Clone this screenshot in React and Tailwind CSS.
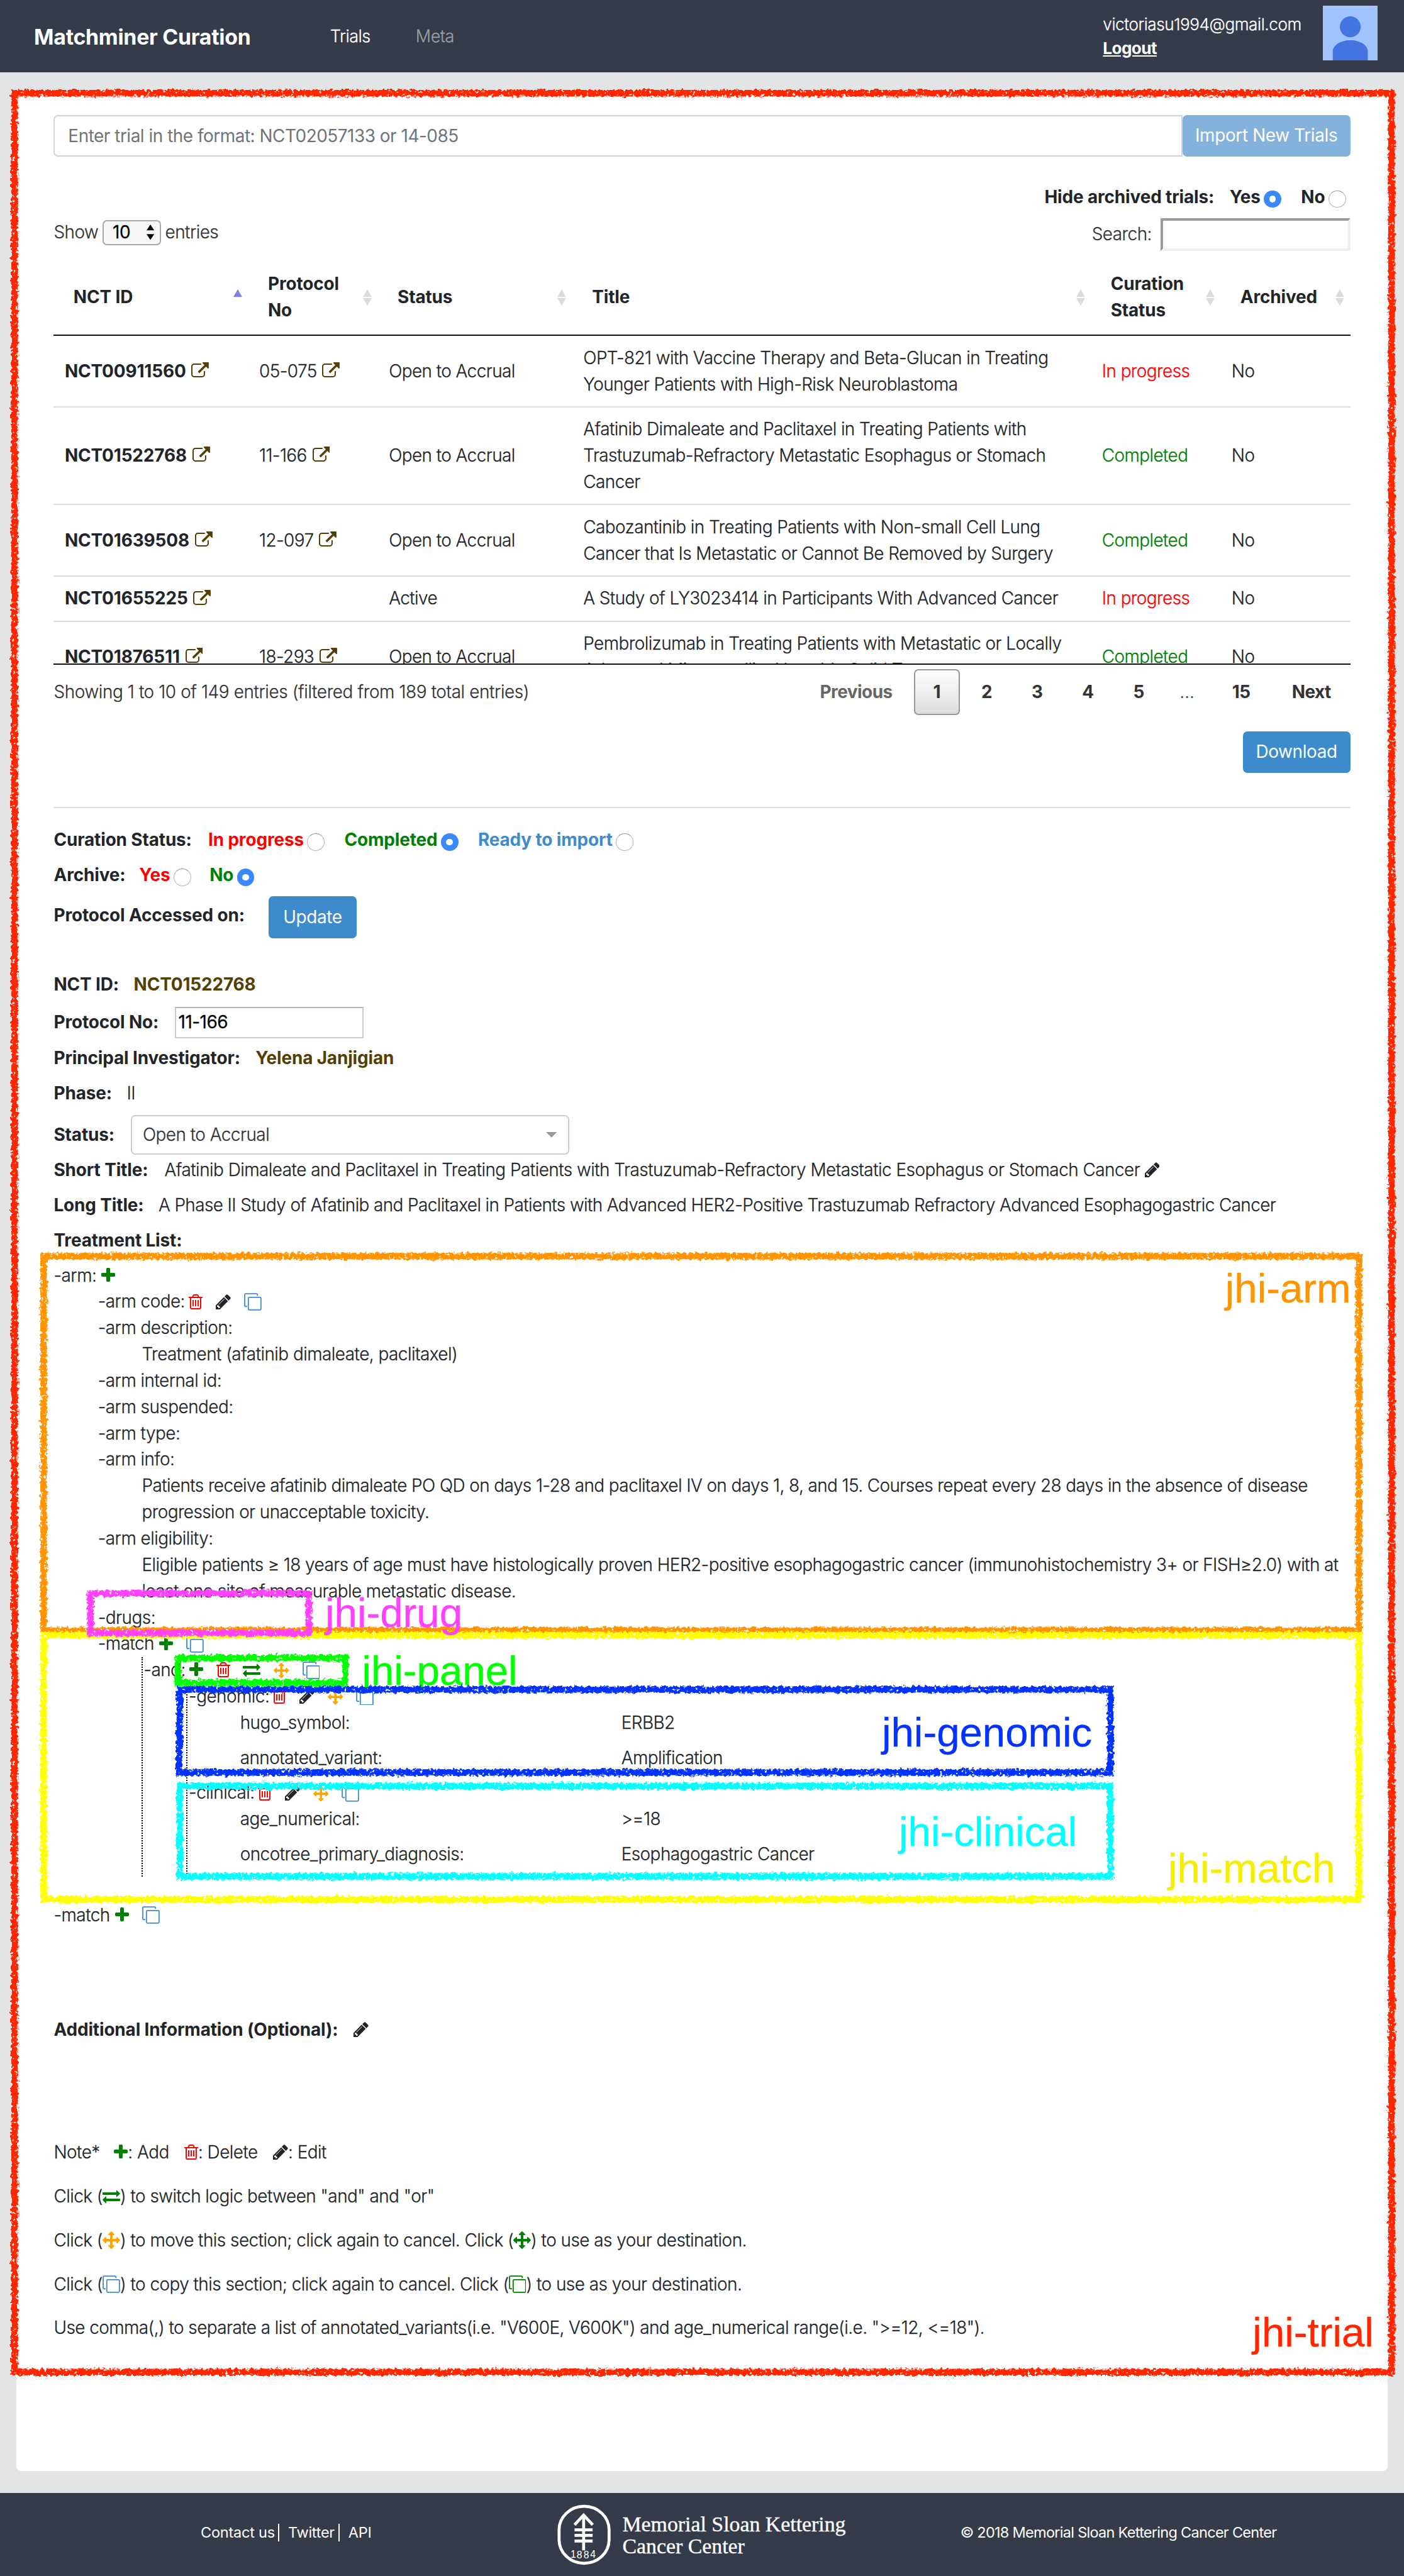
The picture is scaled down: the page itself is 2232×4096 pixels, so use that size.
import React from "react";

const ICONS = {
  external: {
    box: "0 0 1792 1792",
    d: "M1408 928v320q0 119-84.5 203.5t-203.5 84.5h-832q-119 0-203.5-84.5t-84.5-203.5v-832q0-119 84.5-203.5t203.5-84.5h704q14 0 23 9t9 23v64q0 14-9 23t-23 9h-704q-66 0-113 47t-47 113v832q0 66 47 113t113 47h832q66 0 113-47t47-113v-320q0-14 9-23t23-9h64q14 0 23 9t9 23zm384-864v512q0 26-19 45t-45 19-45-19l-176-176-652 652q-10 10-23 10t-23-10l-114-114q-10-10-10-23t10-23l652-652-176-176q-19-19-19-45t19-45 45-19h512q26 0 45 19t19 45z",
  },
  plus: {
    box: "192 0 1408 1792",
    d: "M1600 736v192q0 40-28 68t-68 28h-416v416q0 40-28 68t-68 28h-192q-40 0-68-28t-28-68v-416h-416q-40 0-68-28t-28-68v-192q0-40 28-68t68-28h416v-416q0-40 28-68t68-28h192q40 0 68 28t28 68v416h416q40 0 68 28t28 68z",
  },
  pencil: {
    box: "128 0 1536 1792",
    d: "M491 1536l91-91-235-235-91 91v107h128v128h107zm523-928q0-22-22-22-10 0-17 7l-542 542q-7 7-7 17 0 22 22 22 10 0 17-7l542-542q7-7 7-17zm-54-192l416 416-832 832h-416v-416zm683 96q0 53-37 90l-166 166-416-416 166-165q36-38 90-38 53 0 91 38l235 234q37 39 37 91z",
  },
  trash: {
    box: "192 0 1408 1792",
    d: "M704 736v576q0 14-9 23t-23 9h-64q-14 0-23-9t-9-23v-576q0-14 9-23t23-9h64q14 0 23 9t9 23zm256 0v576q0 14-9 23t-23 9h-64q-14 0-23-9t-9-23v-576q0-14 9-23t23-9h64q14 0 23 9t9 23zm256 0v576q0 14-9 23t-23 9h-64q-14 0-23-9t-9-23v-576q0-14 9-23t23-9h64q14 0 23 9t9 23zm128 724v-948h-896v948q0 22 7 40.5t14.5 27 10.5 8.5h832q3 0 10.5-8.5t14.5-27 7-40.5zm-672-1076h448l-48-117q-7-9-17-11h-317q-10 2-17 11zm928 32v64q0 14-9 23t-23 9h-96v948q0 83-47 143.5t-113 60.5h-832q-66 0-113-58.5t-47-141.5v-952h-96q-14 0-23-9t-9-23v-64q0-14 9-23t23-9h309l70-167q15-37 54-63t79-26h320q40 0 79 26t54 63l70 167h309q14 0 23 9t9 23z",
  },
  exchange: {
    box: "0 0 1792 1792",
    d: "M1792 1184v192q0 13-9.5 22.5t-22.5 9.5h-1376v192q0 13-9.5 22.5t-22.5 9.5q-12 0-24-10l-319-320q-9-9-9-22 0-14 9-23l320-320q9-9 23-9 13 0 22.5 9.5t9.5 22.5v192h1376q13 0 22.5 9.5t9.5 22.5zm0-544q0 14-9 23l-320 320q-9 9-23 9-13 0-22.5-9.5t-9.5-22.5v-192h-1376q-13 0-22.5-9.5t-9.5-22.5v-192q0-13 9.5-22.5t22.5-9.5h1376v-192q0-14 9-23t23-9q12 0 24 10l319 319q9 9 9 23z",
  },
  arrows: {
    box: "0 0 1792 1792",
    d: "M1792 896q0 26-19 45l-256 256q-19 19-45 19t-45-19-19-45v-128h-384v384h128q26 0 45 19t19 45-19 45l-256 256q-19 19-45 19t-45-19l-256-256q-19-19-19-45t19-45 45-19h128v-384h-384v128q0 26-19 45t-45 19-45-19l-256-256q-19-19-19-45t19-45l256-256q19-19 45-19t45 19 19 45v128h384v-384h-128q-26 0-45-19t-19-45 19-45l256-256q19-19 45-19t45 19l256 256q19 19 19 45t-19 45-45 19h-128v384h384v-128q0-26 19-45t45-19 45 19l256 256q19 19 19 45z",
  },
};

const Glyph = ({ name, className = "" }) => (
  <svg viewBox={ICONS[name].box} fill="currentColor" className={"inline-block shrink-0 " + className}>
    <path d={ICONS[name].d} />
  </svg>
);
const External = () => <Glyph name="external" className="ml-[5px] h-4 w-4 align-[-2.3px] text-[#533f03]" />;
const Plus = () => <Glyph name="plus" className="h-4 w-[12.6px] align-[-2.3px] text-[#008000]" />;
const Trash = () => <Glyph name="trash" className="h-4 w-[12.6px] align-[-2.3px] text-[#ff0000]" />;
const Pencil = () => <Glyph name="pencil" className="h-4 w-[13.7px] align-[-2.3px] text-[#212529]" />;
const Exchange = () => <Glyph name="exchange" className="h-4 w-4 align-[-2.3px] text-[#008000]" />;
const Arrows = () => <Glyph name="arrows" className="h-3.5 w-3.5 align-[-2px] text-[#ffa500]" />;
const Copy = ({ className = "text-[#428bca]" }) => (
  <svg viewBox="0 0 16 16" fill="none" stroke="currentColor" strokeWidth="1.05" className={"inline-block h-4 w-4 shrink-0 align-[-2.5px] " + className}>
    <rect x="3.9" y="3.9" width="11.5" height="11.5" rx="0.9" />
    <path d="M12.2 2.4v-.9a.9.9 0 0 0-.9-.9H1.5a.9.9 0 0 0-.9.9v9.8a.9.9 0 0 0 .9.9h1.3" />
  </svg>
);

const Radio = ({ on }) =>
  on ? (
    <span className="mt-[3px] ml-[3px] flex h-4 w-4 shrink-0 items-center justify-center rounded-full bg-[#3b88fd]">
      <span className="h-1.5 w-1.5 rounded-full bg-white" />
    </span>
  ) : (
    <span className="mt-[3px] ml-[3px] h-4 w-4 shrink-0 rounded-full border border-[#b5b5b5] border-t-[#9a9a9a] bg-white" />
  );

const Sorter = ({ active }) =>
  active ? (
    <svg viewBox="0 0 8 15" className="h-[15px] w-2 text-[#8080e0]"><path d="M4 0l4 7H0z" fill="currentColor" /></svg>
  ) : (
    <svg viewBox="0 0 8 15" className="h-[15px] w-2 text-[#dcdcdc]"><path d="M4 0l4 7H0zM0 8h8l-4 7z" fill="currentColor" /></svg>
  );

const GRID = "grid grid-cols-[15%_10%_15%_40%_10%_10%] items-center";

const HEADERS = [["NCT ID"], ["Protocol", "No"], ["Status"], ["Title"], ["Curation", "Status"], ["Archived"]];

const ROWS = [
  ["NCT00911560", "05-075", "Open to Accrual", ["OPT-821 with Vaccine Therapy and Beta-Glucan in Treating", "Younger Patients with High-Risk Neuroblastoma"], "In progress"],
  ["NCT01522768", "11-166", "Open to Accrual", ["Afatinib Dimaleate and Paclitaxel in Treating Patients with", "Trastuzumab-Refractory Metastatic Esophagus or Stomach", "Cancer"], "Completed"],
  ["NCT01639508", "12-097", "Open to Accrual", ["Cabozantinib in Treating Patients with Non-small Cell Lung", "Cancer that Is Metastatic or Cannot Be Removed by Surgery"], "Completed"],
  ["NCT01655225", "", "Active", ["A Study of LY3023414 in Participants With Advanced Cancer"], "In progress"],
  ["NCT01876511", "18-293", "Open to Accrual", ["Pembrolizumab in Treating Patients with Metastatic or Locally", "Advanced Microsatellite Unstable Solid Tumors"], "Completed"],
];

const B = ({ children, className = "" }) => <span className={"font-bold tracking-[-0.07px] [-webkit-text-stroke:0] " + className}>{children}</span>;

function Header() {
  return (
    <header className="flex h-[66px] shrink-0 items-start bg-[#353b48] text-white">
      <div className="ml-[31px] w-[270px] pt-[22px] text-[19.4px] leading-6 font-bold tracking-[-0.15px] [-webkit-text-stroke:0]">Matchminer Curation</div>
      <nav className="flex pt-[21.500px] text-[15.500px]">
        <a className="w-[78px] tracking-[-0.3px]">Trials</a>
        <a className="tracking-[-0.3px] text-[#9a9da3]">Meta</a>
      </nav>
      <div className="ml-auto flex">
        <div className="w-[200.500px] pt-[11.500px] text-[15px] leading-[22px]">
          <div className="tracking-[-0.26px]">victoriasu1994@gmail.com</div>
          <a className="font-bold tracking-[-0.35px] underline [-webkit-text-stroke:0]">Logout</a>
        </div>
        <svg viewBox="0 0 50 50" className="mt-[5px] mr-6 h-[50px] w-[50px]">
          <rect width="50" height="50" fill="#a0c3ff" />
          <circle cx="25" cy="19.3" r="9.5" fill="#4374e0" />
          <path d="M9 50V42c0-6 7-10.500 16-10.500S41 36 41 42v8z" fill="#4374e0" />
        </svg>
      </div>
    </header>
  );
}

function TrialTable() {
  return (
    <section>
      <div className="flex h-[38px]">
        <div className="flex flex-1 items-center rounded-l border-[1.150px] border-[#ced4da] px-3 pt-px font-normal tracking-[-0.27px] text-[#6c757d] [-webkit-text-stroke:0]">
          Enter trial in the format: NCT02057133 or 14-085
        </div>
        <button className="w-[153px] rounded bg-[#84b2dc] font-normal tracking-[-0.2px] whitespace-nowrap text-white [-webkit-text-stroke:0]">Import New Trials</button>
      </div>
      <div className="mt-[25px] flex h-6 items-center justify-end pr-1">
        <B>Hide archived trials:</B>
        <B className="ml-[14px]">Yes</B>
        <Radio on />
        <B className="ml-[18px]">No</B>
        <Radio />
      </div>
      <div className="flex h-[45px] items-start justify-between text-[#333]">
        <div className="flex items-center pt-2">
          Show
          <span className="mx-1 flex h-[23px] w-[53px] items-center justify-between rounded border-[1.150px] border-[#a9a9a9] bg-[#f8f8f8] pr-[5px] pl-[8px] font-normal text-black">
            10
            <svg viewBox="0 0 7 14" className="h-3.5 w-[7px]"><path d="M3.500 0L7 5.300H0zM0 8.700h7L3.500 14z" /></svg>
          </span>
          entries
        </div>
        <div className="flex items-center pt-[7px]">
          Search:
          <span className="ml-2 h-[30px] w-[173px] border-[2.300px] border-t-[#9a9a9a] border-r-[#eee] border-b-[#eee] border-l-[#9a9a9a] bg-white" />
        </div>
      </div>
      <div className={GRID + " h-[69px] border-b-[1.150px] border-[#111] pt-px"}>
        {HEADERS.map((h, i) => (
          <div key={i} className="flex items-center justify-between pr-[5.500px] pl-[18px]">
            <B>{h.map((l) => <span key={l} className="block">{l}</span>)}</B>
            <Sorter active={i === 0} />
          </div>
        ))}
      </div>
      <div className="h-[299px] overflow-hidden pt-[0.500px] tracking-[-0.32px]">
        {ROWS.map(([id, no, status, title, cur], i) => (
          <div key={id} className={GRID + " pt-[8.300px] pb-[7.700px] *:pl-2.5 " + (i ? "border-t-[1.150px] border-[#ddd]" : "")}>
            <div><B className="tracking-[-0.02px]">{id}</B><External /></div>
            <div>{no && <>{no}<External /></>}</div>
            <div>{status}</div>
            <div className="whitespace-nowrap">{title.map((t) => <div key={t}>{t}</div>)}</div>
            <div className={cur === "Completed" ? "text-[#008000]" : "text-[#ff0000]"}>{cur}</div>
            <div>No</div>
          </div>
        ))}
      </div>
      <div className="flex h-[62px] items-start justify-between border-t-[1.150px] border-[#111] pt-1 text-[#333]">
        <div className="pt-[9px] tracking-[-0.215px]">Showing 1 to 10 of 149 entries (filtered from 189 total entries)</div>
        <div className="flex h-[42px] items-center text-center font-bold [-webkit-text-stroke:0]">
          <span className="w-[105px] text-[#666]">Previous</span>
          <span className="flex h-[42px] w-[42px] items-center justify-center rounded-sm border-[1.150px] border-[#979797] bg-linear-to-b from-white to-[#dcdcdc]">1</span>
          <span className="ml-[1.500px] w-[46px]">2</span>
          <span className="w-[46px]">3</span>
          <span className="w-[46.500px]">4</span>
          <span className="w-[46px]">5</span>
          <span className="w-[42px] font-light">…</span>
          <span className="w-[57px]">15</span>
          <span className="w-[71px]">Next</span>
        </div>
      </div>
      <div className="flex justify-end">
        <button className="h-[38px] w-[98px] rounded bg-[#3d8bcd] font-normal tracking-[-0.2px] text-white [-webkit-text-stroke:0]">Download</button>
      </div>
    </section>
  );
}

function TrialDetails() {
  return (
    <section className="mt-[31px] border-t-[1.150px] border-[#e3e3e3] pt-[17.300px]">
      <div className="flex h-6 items-center">
        <B>Curation Status:</B>
        <B className="ml-[15px] text-[#ff0000]">In progress</B>
        <Radio />
        <B className="ml-[18px] text-[#008000]">Completed</B>
        <Radio on />
        <B className="ml-[18px] text-[#428bca]">Ready to import</B>
        <Radio />
      </div>
      <div className="mt-2 flex h-6 items-center">
        <B>Archive:</B>
        <B className="ml-[12.500px] text-[#ff0000]">Yes</B>
        <Radio />
        <B className="ml-[17px] text-[#008000]">No</B>
        <Radio on />
      </div>
      <div className="mt-[7px] flex h-[38px] items-center">
        <B className="mb-[2.500px] w-[196px]">Protocol Accessed on:</B>
        <button className="h-[38px] w-20 rounded bg-[#3d8bcd] font-normal tracking-[-0.2px] text-white [-webkit-text-stroke:0]">Update</button>
      </div>
      <div className="mt-[30.500px] flex gap-[13.500px]">
        <B>NCT ID:</B>
        <B className="text-[#533f03]">NCT01522768</B>
      </div>
      <div className="mt-2 flex h-[29px] items-center">
        <B className="w-[110.500px]">Protocol No:</B>
        <span className="flex h-[29px] w-[172px] items-center border-[1.150px] border-[#cdcdcd] border-t-[#b5b5b5] pl-0.5 font-normal text-black">11-166</span>
      </div>
      <div className="mt-[6.500px] flex gap-[14px]">
        <B>Principal Investigator:</B>
        <B className="text-[#533f03]">Yelena Janjigian</B>
      </div>
      <div className="mt-2 flex gap-[13.500px]"><B>Phase:</B>II</div>
      <div className="mt-[7.500px] flex h-9 items-center">
        <B className="w-[70px]">Status:</B>
        <span className="flex h-9 w-[400px] items-center justify-between rounded border-[1.150px] border-[#ccc] pr-2.5 pl-2.5 text-[#333]">
          Open to Accrual
          <svg viewBox="0 0 10 5" className="h-[5px] w-2.5 text-[#999]"><path d="M0 0h10L5 5z" fill="currentColor" /></svg>
        </span>
      </div>
      <div className="mt-[2.500px] flex items-baseline">
        <B className="w-[101px]">Short Title:</B>
        <span className="tracking-[-0.29px]">Afatinib Dimaleate and Paclitaxel in Treating Patients with Trastuzumab-Refractory Metastatic Esophagus or Stomach Cancer <Pencil /></span>
      </div>
      <div className="mt-2 flex tracking-[-0.335px]">
        <B className="w-[95.500px]">Long Title:</B>
        A Phase II Study of Afatinib and Paclitaxel in Patients with Advanced HER2-Positive Trastuzumab Refractory Advanced Esophagogastric Cancer
      </div>
      <div className="mt-2"><B>Treatment List:</B></div>
    </section>
  );
}

const Field = ({ name, children }) => (
  <div className="grid grid-cols-[347.500px_1fr] pb-2"><span>{name}</span><span>{children}</span></div>
);

function Treatment() {
  return (
    <section className="mt-2">
      <div><span className="inline-block w-[43.200px]">-arm:</span><Plus /></div>
      <div className="pl-[40.300px]">
        <div className="flex items-center">
          <span className="w-[83px]">-arm code:</span>
          <span className="space-x-3"><Trash /><Pencil /><Copy /></span>
        </div>
        <div>-arm description:</div>
        <div className="pl-10">Treatment (afatinib dimaleate, paclitaxel)</div>
        <div>-arm internal id:</div>
        <div>-arm suspended:</div>
        <div>-arm type:</div>
        <div>-arm info:</div>
        <div className="pl-10 tracking-[-0.325px] whitespace-nowrap">
          Patients receive afatinib dimaleate PO QD on days 1-28 and paclitaxel IV on days 1, 8, and 15. Courses repeat every 28 days in the absence of disease
          <br />progression or unacceptable toxicity.
        </div>
        <div>-arm eligibility:</div>
        <div className="pl-10 tracking-[-0.315px] whitespace-nowrap">
          Eligible patients ≥ 18 years of age must have histologically proven HER2-positive esophagogastric cancer (immunohistochemistry 3+ or FISH≥2.0) with at
          <br />least one site of measurable metastatic disease.
        </div>
        <div>-drugs:</div>
        <div className="flex items-center">
          <span className="w-[56px]">-match</span>
          <span className="space-x-3"><Plus /><Copy /></span>
        </div>
        <div className="ml-[39.500px] border-l-[1.150px] border-dotted border-black">
          <div className="flex items-center pl-px">
            <span className="w-[41.500px]">-and:</span>
            <span className="space-x-3"><Plus /><Trash /><Exchange /><Arrows /><Copy /></span>
          </div>
          <div className="ml-10 border-l-[1.150px] border-dotted border-black">
            <div className="flex items-center pl-px">
              <span className="w-[76.500px]">-genomic:</span>
              <span className="space-x-3"><Trash /><Pencil /><Arrows /><Copy /></span>
            </div>
            <div className="pl-[47.800px]">
              <Field name="hugo_symbol:">ERBB2</Field>
              <Field name="annotated_variant:">Amplification</Field>
            </div>
            <div className="flex items-center pl-px">
              <span className="w-[63px]">-clinical:</span>
              <span className="space-x-3"><Trash /><Pencil /><Arrows /><Copy /></span>
            </div>
            <div className="pl-[47.800px]">
              <Field name="age_numerical:">&gt;=18</Field>
              <Field name="oncotree_primary_diagnosis:">Esophagogastric Cancer</Field>
            </div>
          </div>
        </div>
      </div>
      <div className="mt-[23.500px] flex items-center">
        <span className="w-[56px]">-match</span>
        <span className="space-x-3"><Plus /><Copy /></span>
      </div>
    </section>
  );
}

function Notes() {
  return (
    <section className="mt-[80.500px]">
      <div><B className="mr-3.5">Additional Information (Optional):</B><Pencil /></div>
      <div className="mt-[88px] flex">
        <span className="w-[55px]">Note*</span>
        <span className="w-[64px]"><Plus />: Add</span>
        <span className="w-[81px]"><Trash />: Delete</span>
        <span><Pencil />: Edit</span>
      </div>
      <p className="mt-4">Click (<Exchange />) to switch logic between "and" and "or"</p>
      <p className="mt-4">
        Click (<Glyph name="arrows" className="h-4 w-4 align-[-2.3px] text-[#ffa500]" />) to move this section; click again to cancel. Click (
        <Glyph name="arrows" className="h-4 w-4 align-[-2.3px] text-[#008000]" />) to use as your destination.
      </p>
      <p className="mt-4">
        Click (<Copy />) to copy this section; click again to cancel. Click (<Copy className="text-[#008000]" />) to use as your destination.
      </p>
      <p className="mt-4 tracking-[-0.315px]">Use comma(,) to separate a list of annotated_variants(i.e. "V600E, V600K") and age_numerical range(i.e. "&gt;=12, &lt;=18").</p>
    </section>
  );
}

function Footer() {
  return (
    <footer className="flex h-[76px] shrink-0 bg-[#353b48] text-[13.500px] font-normal tracking-[-0.15px] text-white [-webkit-text-stroke:0]">
      <div className="flex h-[73px] w-[508px] items-center pl-[183px] leading-4">
        <span className="w-[70.500px]">Contact us</span>
        <span className="w-[55px] border-l-[1.150px] border-white pl-2">Twitter</span>
        <span className="border-l-[1.150px] border-white pl-2">API</span>
      </div>
      <svg viewBox="0 0 49 56" fill="none" stroke="white" strokeWidth="2.700" className="mt-[10.500px] h-14 w-[49px]">
        <rect x="1.600" y="1.800" width="45.600" height="52" rx="22.800" ry="21.500" />
        <path d="M24 9.500V42M15.700 18.700L24 9.800l8.300 8.900M15.700 23.300H32.200M15.700 28.300H32.200M15.700 33.500H32.200" />
        <text fill="white" stroke="none" className="font-['Liberation_Sans'] text-[9px]">
          <tspan x="12" y="48.600">1</tspan><tspan x="17.600" y="49.600">8</tspan><tspan x="24" y="49.600">8</tspan><tspan x="30" y="48.600">4</tspan>
        </text>
      </svg>
      <div className="w-[309px] pt-[19px] pl-[10.500px] font-['Liberation_Serif'] text-[19.400px] leading-5 tracking-normal [-webkit-text-stroke:0.2px]">
        Memorial Sloan Kettering<br />Cancer Center
      </div>
      <div className="flex h-[73px] items-center pl-[9.500px] tracking-[-0.42px]">© 2018 Memorial Sloan Kettering Cancer Center</div>
    </footer>
  );
}

/* Hand-drawn component outlines laid over the page */
const OUTLINES = [
  ["#ff2600", 13.3, 85, 1268.7, 2163],
  ["#ff9300", 39.8, 1145.5, 1239, 1486.8],
  ["#ffff00", 39.8, 1491, 1239, 1732],
  ["#ff40ff", 82.4, 1453, 281.6, 1489],
  ["#00ff00", 162.2, 1511.8, 314.7, 1534.3],
  ["#0433ff", 163.5, 1540.6, 1012.2, 1616.3],
  ["#00ffff", 164, 1628.6, 1012.2, 1711],
];

function Annotations() {
  const label = "absolute font-['Liberation_Sans'] text-[37.500px] leading-none font-normal tracking-normal ";
  return (
    <div className="pointer-events-none absolute inset-0 [-webkit-text-stroke:0.2px]">
      <span className={label + "top-[1505px] left-[330px] text-[#00ff00]"}>jhi-panel</span>
      <svg viewBox="0 0 1280 2349" className="absolute inset-0 h-[2349px] w-[1280px]">
        <defs>
          <filter id="crayon" filterUnits="userSpaceOnUse" x="0" y="0" width="1280" height="2349">
            <feTurbulence type="fractalNoise" baseFrequency="0.35" numOctaves="2" seed="4" result="n" />
            <feDisplacementMap in="SourceGraphic" in2="n" scale="5" xChannelSelector="R" yChannelSelector="G" result="rough" />
            <feColorMatrix in="n" type="matrix" values="0 0 0 0 0  0 0 0 0 0  0 0 0 0 0  0 0 -9 0 6.900" result="holes" />
            <feComposite in="rough" in2="holes" operator="in" />
          </filter>
        </defs>
        <g filter="url(#crayon)" fill="none" strokeWidth="6">
          {OUTLINES.map(([c, x1, y1, x2, y2]) => (
            <rect key={c} x={x1} y={y1} width={x2 - x1} height={y2 - y1} stroke={c} />
          ))}
        </g>
      </svg>
      <span className={label + "top-[1156px] left-[1117px] text-[#ff9300]"}>jhi-arm</span>
      <span className={label + "top-[1452px] left-[296.500px] text-[#ff40ff]"}>jhi-drug</span>
      <span className={label + "top-[1561px] left-[804px] text-[#0433ff]"}>jhi-genomic</span>
      <span className={label + "top-[1651.500px] left-[819.500px] text-[#00ffff]"}>jhi-clinical</span>
      <span className={label + "top-[1685px] left-[1065px] text-[#f5ee00]"}>jhi-match</span>
      <span className={label + "top-[2108px] left-[1142px] text-[#ff2600]"}>jhi-trial</span>
    </div>
  );
}

export default function App() {
  return (
    <div className="h-[4096px] w-[2232px] overflow-hidden">
      <div className="relative flex h-[2349px] w-[1280px] flex-col bg-[#e3e4e6] font-['Inter',sans-serif] text-[16px] leading-6 font-light tracking-[-0.295px] text-[#212529] [-webkit-text-stroke:0.15px] [zoom:1.74375]">
        <Header />
        <main className="mx-[15px] mt-5 mb-5 flex-1 rounded-b bg-white px-[34px] pt-[19px]">
          <TrialTable />
          <TrialDetails />
          <Treatment />
          <Notes />
        </main>
        <Footer />
        <Annotations />
      </div>
    </div>
  );
}
